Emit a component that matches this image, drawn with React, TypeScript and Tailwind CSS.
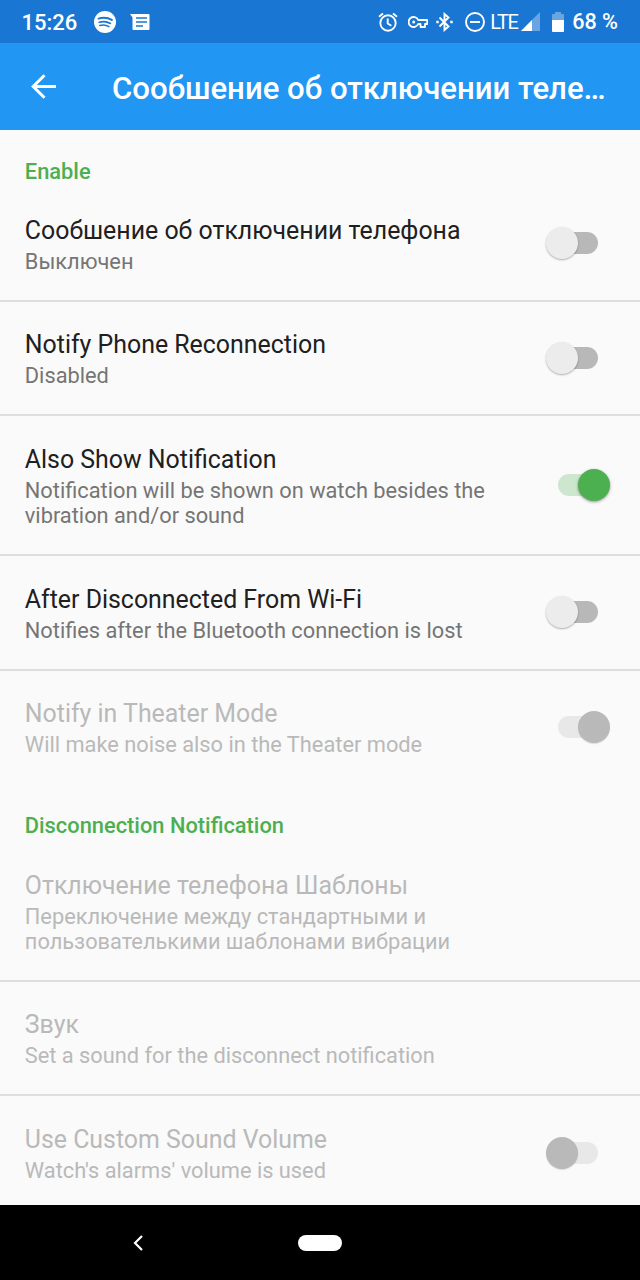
import type { ReactNode } from "react";
import clsx from "clsx";

type SwitchState = "on" | "off";

function Toggle({ state, disabled }: { state: SwitchState; disabled?: boolean }) {
  const on = state === "on";
  return (
    <div className={clsx("flex w-16 shrink-0 items-center", on ? "justify-end" : "justify-start")}>
      {on && <div className={clsx("-mr-4 h-[22px] w-9 rounded-l-full", disabled ? "bg-[#e8e8e8]" : "bg-[#cce7cd]")} />}
      <div
        className={clsx(
          "z-10 size-8 rounded-full",
          disabled && "bg-[#b9b9b9] shadow-[0_1px_1px_rgba(0,0,0,0.12)]",
          !disabled && on && "bg-[#4caf50] shadow-[0_1px_3px_rgba(0,0,0,0.4)]",
          !disabled && !on && "bg-[#ececec] shadow-[0_1px_2px_rgba(0,0,0,0.3)]",
        )}
      />
      {!on && <div className={clsx("-ml-4 h-[22px] w-9 rounded-r-full", disabled ? "bg-[#e8e8e8]" : "bg-[#b8b8b8]")} />}
    </div>
  );
}

type RowProps = {
  title: string;
  children: ReactNode;
  toggle?: SwitchState;
  disabled?: boolean;
  tall?: boolean;
  last?: boolean;
};

function Row({ title, children, toggle, disabled, tall, last }: RowProps) {
  return (
    <div
      className={clsx(
        "flex shrink-0 items-stretch border-b-2 pr-[30px] pl-[24.8px]",
        tall ? "h-[139.8px]" : "h-[114.6px]",
        last ? "border-transparent" : "border-[#dedede]",
      )}
    >
      <div className="flex-1 pt-[26.8px]">
        <h2 className={clsx("text-[24.9px] leading-[34px] whitespace-nowrap", disabled ? "text-[#b9b9b9]" : "text-[#202020]")}>
          {title}
        </h2>
        <p className={clsx("pt-px text-[21.8px] leading-[25.4px] whitespace-nowrap", disabled ? "text-[#b9b9b9]" : "text-[#757575]")}>
          {children}
        </p>
      </div>
      {toggle && <Toggle state={toggle} disabled={disabled} />}
    </div>
  );
}

function StatusBar() {
  return (
    <div className="flex h-[43.4px] shrink-0 items-center bg-[#1976d2] pr-[22px] pl-[21.5px] text-[22px] font-medium text-white">
      <span className="w-[72.5px] pt-px">15:26</span>
      <svg className="size-[22px]" viewBox="0 0 22 22" fill="none">
        <circle cx="11" cy="11" r="11" fill="#fff" />
        <g stroke="#1976d2" strokeLinecap="round">
          <path d="M4.500 7.600c4.500-1.300 9.600-.8 13.300 1.300" strokeWidth="2" />
          <path d="M5.200 11.200c3.900-1.100 8-.6 11.200 1.200" strokeWidth="1.700" />
          <path d="M5.800 14.500c3.200-.9 6.500-.5 9.200 1.100" strokeWidth="1.400" />
        </g>
      </svg>
      <svg className="ml-[14px] h-4 w-5" viewBox="0 0 20 16" fill="#fff">
        <path fillRule="evenodd" d="M0 0h18.500q1 0 1 1v14q0 1-1 1H3.500q-1 0-1-1V3.500zM6 3.200v1.600h11V3.200zM6 7.200v1.600h11V7.200zM6 11.200v1.600h7v-1.600z" />
      </svg>

      <div className="flex-1" />

      <svg className="size-5" viewBox="0 0 20 20" fill="none" stroke="#fff" strokeWidth="1.900">
        <circle cx="10" cy="11" r="7.700" />
        <path d="M9.700 6.500v5l3.700 2.200M1 4.700l4-3.300M19 4.700l-4-3.300" />
      </svg>
      <svg className="ml-[10px] h-3 w-5" viewBox="0 0 20 12" fill="none" stroke="#fff" strokeWidth="1.800">
        <path d="M10.200 4A5 5 0 1 0 10.200 8H12.500V11H17V8H19.200V4Z" strokeLinejoin="round" />
        <circle cx="5.700" cy="6" r="1.500" fill="#fff" stroke="none" />
      </svg>
      <svg className="ml-2 h-5 w-[17px]" viewBox="0 0 17 20" fill="none" stroke="#fff" strokeWidth="1.900">
        <path d="M3.500 5.500l9 9L8.500 18V2l4 3.500-9 9" />
        <path d="M.3 10h2.400M14.300 10h2.400" strokeWidth="2.400" />
      </svg>
      <svg className="ml-3 size-5" viewBox="0 0 20 20" fill="none" stroke="#fff" strokeWidth="1.900">
        <circle cx="10" cy="10" r="9" />
        <path d="M5 10h10" />
      </svg>
      <span className="ml-[5px] w-[27px] text-[20px] font-normal tracking-[-1.3px]">LTE</span>
      <svg className="ml-[4px] h-[19px] w-[19px]" viewBox="0 0 19 19" fill="#fff">
        <path d="M19 0v19H0z" opacity=".35" />
        <path d="M11 8v11H0z" />
      </svg>
      <svg className="ml-[12px] h-5 w-3" viewBox="0 0 12 20" fill="#fff">
        <path d="M3 0h6v2h2q1 0 1 1v5H0V3q0-1 1-1h2z" opacity=".35" />
        <path d="M0 8h12v11q0 1-1 1H1q-1 0-1-1z" />
      </svg>
      <span className="ml-[8px] pt-px text-[21.6px] whitespace-nowrap">68 %</span>
    </div>
  );
}

function AppBar() {
  return (
    <header className="flex h-[87.1px] shrink-0 items-center bg-[#2196f3] pl-[31px] text-white">
      <svg className="size-[25px]" viewBox="0 0 25 25" fill="none" stroke="#fff" strokeWidth="3">
        <path d="M13.500 1.200L2.200 12.500l11.300 11.300M2.200 12.500H25" />
      </svg>
      <h1 className="ml-14 pt-[5px] text-[31.15px] font-medium whitespace-nowrap">Сообшение об отключении теле…</h1>
    </header>
  );
}

function SectionTitle({ children }: { children: ReactNode }) {
  return <div className="h-[56.6px] shrink-0 pt-[28.2px] pl-[24.8px] text-[21.85px] leading-[26px] font-medium text-[#4caf50]">{children}</div>;
}

export default function App() {
  return (
    <div className="flex h-[1280px] w-[640px] flex-col overflow-hidden bg-[#fafafa] font-['Roboto',sans-serif]">
      <StatusBar />
      <AppBar />
      <main className="flex min-h-0 flex-1 flex-col overflow-hidden">
        <SectionTitle>Enable</SectionTitle>
        <Row title="Сообшение об отключении телефона" toggle="off">
          Выключен
        </Row>
        <Row title="Notify Phone Reconnection" toggle="off">
          Disabled
        </Row>
        <Row title="Also Show Notification" toggle="on" tall>
          Notification will be shown on watch besides the
          <br />
          vibration and/or sound
        </Row>
        <Row title="After Disconnected From Wi-Fi" toggle="off">
          Notifies after the Bluetooth connection is lost
        </Row>
        <Row title="Notify in Theater Mode" toggle="on" disabled last>
          Will make noise also in the Theater mode
        </Row>
        <SectionTitle>Disconnection Notification</SectionTitle>
        <Row title="Отключение телефона Шаблоны" disabled tall>
          Переключение между стандартными и
          <br />
          пользователькими шаблонами вибрации
        </Row>
        <Row title="Звук" disabled>
          Set a sound for the disconnect notification
        </Row>
        <Row title="Use Custom Sound Volume" toggle="off" disabled last>
          Watch's alarms' volume is used
        </Row>
      </main>
      <nav className="flex h-[75px] shrink-0 items-center bg-black pl-[133px]">
        <svg className="h-4 w-[10px]" viewBox="0 0 10 16" fill="none" stroke="#fff" strokeWidth="2.200">
          <path d="M9 1L2 8l7 7" />
        </svg>
        <div className="ml-[155px] h-4 w-11 rounded-full bg-white" />
      </nav>
    </div>
  );
}
